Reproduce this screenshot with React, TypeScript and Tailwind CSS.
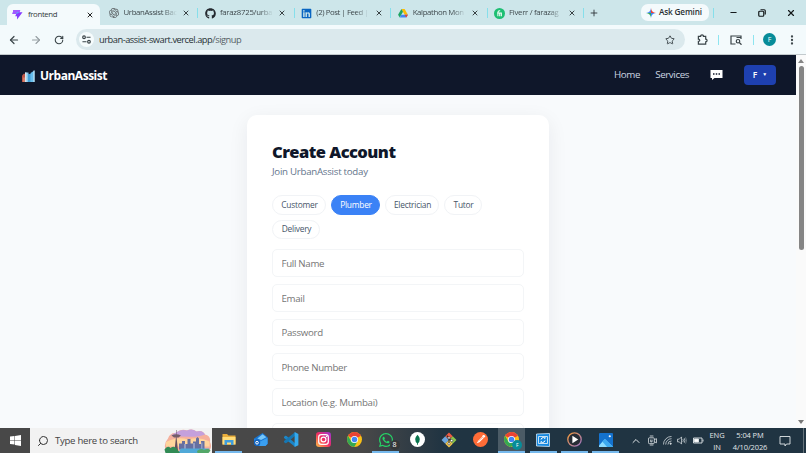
import React from 'react';
import {
  ArrowLeft,
  ArrowRight,
  ChevronUp,
  EllipsisVertical,
  Minus,
  Plus,
  RotateCw,
  Search,
  Star,
  X,
} from 'lucide-react';
import { FaGithub, FaLinkedin, FaWhatsapp } from 'react-icons/fa';
import { SiOpenai } from 'react-icons/si';

const DriveIcon = () => (
  <svg viewBox="0 0 24 22" className="w-[10px] h-[9px]">
    <path d="M8 0h8l8 14h-8z" fill="#fbbc04" />
    <path d="M8 0l4 7-8 14-4-7z" fill="#1fa463" />
    <path d="M8 14h16l-4 7H4z" fill="#4285f4" />
    <path d="M16 14h8l-4 7z" fill="#ea4335" />
  </svg>
);

const ViteIcon = () => (
  <svg viewBox="0 0 24 24" className="w-[11px] h-[11px]">
    <path d="M3 2h15l-2 5h7L11 23v-7H7l2-5H1z" fill="#863bff" />
    <path d="M3 2h15l-2 5-7 4H1z" fill="#a259ff" />
    <path d="M9 11l7-4h-5z" fill="#47bfff" />
  </svg>
);

const FiverrIcon = () => (
  <svg viewBox="0 0 24 24" className="w-[11px] h-[11px]">
    <circle cx="12" cy="12" r="12" fill="#1dbf73" />
    <path d="M8.500 18v-8q0-4 4-4h1M7 11h9v7M12.500 18v-7" fill="none" stroke="#fff" strokeWidth="2.200" />
  </svg>
);

const tabs = [
  { title: 'UrbanAssist Bac', icon: <SiOpenai className="w-[10px] h-[10px] text-[#55595c]" />, tracking: 'tracking-[-0.36px]' },
  { title: 'faraz8725/urba', icon: <FaGithub className="w-[11px] h-[11px] text-[#24292f]" />, tracking: 'tracking-[-0.25px]' },
  { title: '(2) Post | Feed |', icon: <FaLinkedin className="w-[11px] h-[11px] text-[#0a66c2]" />, tracking: 'tracking-[-0.42px]' },
  { title: 'Kalpathon Mon', icon: <DriveIcon />, tracking: 'tracking-[-0.36px]' },
  { title: 'Fiverr / farazag', icon: <FiverrIcon />, tracking: 'tracking-[-0.3px]' },
];

const TabStrip = () => (
  <div className="flex h-[25px] bg-[#cde6ea] text-[#3f494d] text-[7.8px]">
    <div className="mt-1 ml-[7px] w-[93px] shrink-0 flex items-center rounded-t-[6px] bg-[#f4fafc] pl-[5px] pr-[6px]">
      <ViteIcon />
      <span className="ml-[5px] flex-1 text-[#30383b] tracking-[-0.35px]">frontend</span>
      <X className="w-2 h-2 text-[#222]" strokeWidth={3} />
    </div>
    <div className="flex pl-[2px] pt-px">
      {tabs.map((tab) => (
        <div key={tab.title} className="flex items-center w-[96.400px] shrink-0 pl-[6.500px]">
          <span className="w-[11px] flex justify-center shrink-0">{tab.icon}</span>
          <span className={`ml-1 w-[53px] whitespace-nowrap [mask-image:linear-gradient(to_right,#000_75%,transparent)] ${tab.tracking}`}>
            {tab.title}
          </span>
          <X className="ml-[5.500px] w-2 h-2 shrink-0 text-[#3a4245]" strokeWidth={3} />
          <span className="ml-auto h-[10px] w-px bg-[#86dfeb]" />
        </div>
      ))}
    </div>
    <Plus className="ml-[5px] mt-2 w-[10px] h-[10px] text-[#30383b]" strokeWidth={2.2} />
    <div className="ml-auto mt-1 w-[68px] h-[17px] rounded-[7px] bg-[#f4fafc] flex items-center gap-[3px] pl-[5px] font-semibold text-[#2a3033] text-[8.2px] tracking-[-0.16px] whitespace-nowrap">
      <svg viewBox="0 0 24 24" className="w-[10px] h-[10px] shrink-0">
        <path d="M12 0q1 11 12 12H12z" fill="#ea4335" />
        <path d="M24 12q-11 1-12 12V12z" fill="#4285f4" />
        <path d="M12 24q-1-11-12-12h12z" fill="#34a853" />
        <path d="M0 12q11-1 12-12v12z" fill="#4285f4" />
      </svg>
      Ask Gemini
    </div>
    <span className="ml-[4px] mt-2 h-[10px] w-px bg-[#86dfeb]" />
    <div className="flex items-center gap-5 ml-[15px] mr-[10px] text-[#151a1c]">
      <Minus className="w-[9px] h-[9px]" strokeWidth={3} />
      <svg viewBox="0 0 16 16" className="w-2 h-2" fill="none" stroke="currentColor" strokeWidth="2.400">
        <rect x="1.500" y="4.500" width="10" height="10" rx="2" />
        <path d="M5 1.500h7.500q2 0 2 2V11" />
      </svg>
      <X className="w-[10px] h-[10px]" strokeWidth={2.8} />
    </div>
  </div>
);

const Toolbar = () => (
  <div className="flex items-center h-[30px] bg-[#f3fafc] border-b border-[#c3cacd] pl-2 text-[#394347]">
    <ArrowLeft className="w-3 h-3" strokeWidth={2.4} />
    <ArrowRight className="ml-[10px] w-3 h-3 text-[#959da1]" strokeWidth={2.2} />
    <RotateCw className="ml-[12px] w-[10px] h-[10px]" strokeWidth={2.6} />
    <div className="ml-[12px] w-[609px] h-[21px] rounded-full bg-[#dbe9ed] flex items-center pl-[3px] pr-[10px]">
      <span className="w-[15px] h-[15px] rounded-full bg-[#f6fcfd] flex items-center justify-center">
        <svg viewBox="0 0 20 20" className="w-[9px] h-[9px]" fill="none" stroke="currentColor" strokeWidth="2.500">
          <circle cx="4.500" cy="5" r="3" />
          <path d="M10 5h9M1 15h9" />
          <circle cx="15.500" cy="15" r="3" />
        </svg>
      </span>
      <span className="ml-[5px] flex-1 pt-px text-[9.3px] tracking-[-0.48px] text-[#283135]">
        urban-assist-swart.vercel.app<span className="text-[#566166]">/signup</span>
      </span>
      <Star className="w-[10px] h-[10px]" strokeWidth={2.2} />
    </div>
    <svg viewBox="0 0 24 24" className="ml-[12px] w-[11px] h-[11px]" fill="none" stroke="currentColor" strokeWidth="2.600">
      <path d="M3 5h5q0-3 3-3t3 3h5v6q3 0 3 3t-3 3v5H3v-6q3 0 3-2.500T3 11z" />
    </svg>
    <span className="ml-[10px] h-[10px] w-px bg-[#8ee5f0]" />
    <svg viewBox="0 0 24 20" className="ml-[11px] w-[12px] h-[10px]" fill="none" stroke="currentColor" strokeWidth="2.400">
      <path d="M11 18H2V2h20v6M13 5h9" />
      <circle cx="16" cy="12.500" r="3.500" />
      <path d="M19 15.500l4 4" />
    </svg>
    <span className="ml-[11px] h-[10px] w-px bg-[#8ee5f0]" />
    <span className="ml-[9px] w-[13px] h-[13px] rounded-full bg-[#078c99] text-white text-[7px] leading-[13px] text-center">F</span>
    <EllipsisVertical className="ml-[10px] w-3 h-3" strokeWidth={2.6} />
  </div>
);

const Navbar = () => (
  <nav className="flex items-center h-10 bg-[#0f172a] pl-[22px] pr-5 text-[#cbd5e1] text-[9.8px]">
    <svg viewBox="0 0 26 24" className="mt-[2px] w-[13px] h-3">
      <path d="M0 11l4-4 3 2v15H0z" fill="#bd5546" />
      <path d="M6 5h7v19H6z" fill="#86c7e8" />
      <path d="M6 5h3v19H6z" fill="#d5e4ed" />
      <path d="M12 8h6v16h-6z" fill="#429fd8" />
      <path d="M17 6l8-5v23h-8z" fill="#67bdec" />
      <path d="M23 1h2v23h-2z" fill="#d6edf7" />
      <path d="M3 15h2v9H3z" fill="#e9a388" />
    </svg>
    <span className="ml-[5px] flex-1 pt-px font-bold text-white text-[12px] tracking-[-0.48px]">UrbanAssist</span>
    <span className="pt-px tracking-[-0.35px]">Home</span>
    <span className="ml-[15px] pt-px tracking-[-0.42px]">Services</span>
    <svg viewBox="0 0 26 20" className="ml-[21px] w-[13px] h-[10px]">
      <path d="M1 0h24v16H9l-5 4v-4H1z" fill="#fff" />
      <path d="M6 8h3M11.500 8h3M17 8h3" stroke="#0f172a" strokeWidth="3" />
    </svg>
    <button className="ml-[21px] w-8 h-5 rounded-[4px] bg-[#1e40af] text-white font-semibold text-[8.5px] flex items-center justify-center gap-[5px]">
      F
      <span className="text-[5px]">▼</span>
    </button>
  </nav>
);

const roles = [
  { name: 'Customer', width: 'w-[54px]' },
  { name: 'Plumber', width: 'w-[49px]' },
  { name: 'Electrician', width: 'w-[54px]' },
  { name: 'Tutor', width: 'w-[38px]' },
  { name: 'Delivery', width: 'w-[48px]' },
];

const fields = ['Full Name', 'Email', 'Password', 'Phone Number', 'Location (e.g. Mumbai)', 'Experience'];

const SignupCard = () => (
  <div className="w-[302px] h-[420px] shrink-0 rounded-[10px] bg-white shadow-[0_5px_20px_rgba(15,23,42,0.07)] px-[25px] pt-6">
    <h1 className="text-[16.5px] leading-[25px] font-extrabold tracking-[-0.54px] text-[#0f172a]">Create Account</h1>
    <p className="pt-px text-[9.7px] leading-[14px] tracking-[-0.26px] text-[#64748b]">Join UrbanAssist today</p>
    <div className="mt-4 flex flex-wrap gap-[5px]">
      {roles.map(({ name, width }) => (
        <button
          key={name}
          className={`${width} h-[19.500px] pt-px pl-px rounded-full border text-[8.400px] tracking-[-0.25px] ${
            name === 'Plumber' ? 'bg-[#3b82f6] border-[#3b82f6] text-white' : 'border-[#f1f3f6] text-[#475569]'
          }`}
        >
          {name}
        </button>
      ))}
    </div>
    <div className="mt-[10px] flex flex-col gap-[7px]">
      {fields.map((field) => (
        <input
          key={field}
          placeholder={field}
          className="h-[27.800px] w-full rounded-[5px] border border-[#f3f5f7] pl-[8.500px] pt-px text-[9.700px] tracking-[-0.3px] placeholder:text-[#757575]"
        />
      ))}
    </div>
  </div>
);

const FolderIcon = () => (
  <svg viewBox="0 0 28 26" className="w-[14px] h-[13px]">
    <path d="M1 2h9l3 3h14v18H1z" fill="#e9ad3b" />
    <path d="M1 8h26v15H1z" fill="#ffdc79" />
    <path d="M5 14h18v10h-5v-5h-8v5H5z" fill="#3e9ddd" />
  </svg>
);

const MailIcon = () => (
  <svg viewBox="0 0 28 28" className="w-[15px] h-[15px]">
    <path d="M2 12L18 2l9 8v13l-4 3H6l-4-4z" fill="#1976d2" />
    <path d="M8 12L18 4l7 6-10 5z" fill="#77c7fa" />
    <path d="M2 13l14 4 11-7v12l-4 4H7l-5-4z" fill="#2689e8" />
    <path d="M13 18l14-7v11l-4 4H12z" fill="#3a9ff0" />
    <circle cx="7.500" cy="20" r="6" fill="#1263bd" />
    <circle cx="7.500" cy="20" r="2.500" fill="none" stroke="#fff" strokeWidth="1.800" />
  </svg>
);

const CodeIcon = () => (
  <svg viewBox="0 0 24 24" className="w-[15px] h-[15px]">
    <path d="M0 8l2-2 2 .5L18 18v6L0 9.500z" fill="#1b86c8" />
    <path d="M0 16l2 2 2-.5L18 6V0L0 14.500z" fill="#1677b3" />
    <path d="M17 0l6 3v18l-6 3z" fill="#35a9ed" />
  </svg>
);

const InstagramIcon = () => (
  <svg viewBox="0 0 28 28" className="w-[15px] h-[15px]">
    <defs>
      <linearGradient id="insta" x1="0" y1="1" x2="1" y2="0">
        <stop offset="0" stopColor="#ffc144" />
        <stop offset="0.500" stopColor="#f02b62" />
        <stop offset="1" stopColor="#9a38dc" />
      </linearGradient>
    </defs>
    <rect width="28" height="28" rx="6" fill="url(#insta)" />
    <g fill="none" stroke="#fff" strokeWidth="2.200">
      <rect x="5" y="5" width="18" height="18" rx="5" />
      <circle cx="14" cy="14" r="4.500" />
    </g>
    <circle cx="19.500" cy="8.500" r="1.300" fill="#fff" />
  </svg>
);

const ChromeIcon = () => (
  <svg viewBox="0 0 28 28" className="w-[15px] h-[15px]">
    <circle cx="14" cy="14" r="14" fill="#fbc116" />
    <path d="M14 14L2 7a14 14 0 0 1 24 0z" fill="#e94335" />
    <path d="M14 14L8 17.500 2 7a14 14 0 0 0 11.500 21l6-10.500z" fill="#34a853" />
    <circle cx="14" cy="14" r="6.700" fill="#fff" />
    <circle cx="14" cy="14" r="5.200" fill="#4285f4" />
  </svg>
);

const MongoIcon = () => (
  <svg viewBox="0 0 28 28" className="w-[15px] h-[15px]">
    <circle cx="14" cy="14" r="14" fill="#fff" />
    <path d="M14 5q9 9 0 17-9-8 0-17z" fill="#08734d" />
    <path d="M14 13v11" stroke="#08734d" strokeWidth="1.500" />
  </svg>
);

const GitIcon = () => (
  <svg viewBox="0 0 30 30" className="w-4 h-4">
    <path d="M15 1l7 7-7 7-7-7z" fill="#ee5a41" />
    <path d="M8 8l7 7-7 7-7-7z" fill="#6ba5df" />
    <path d="M22 8l7 7-7 7-7-7z" fill="#8bc34a" />
    <path d="M15 15l7 7-7 7-7-7z" fill="#f5c84c" />
    <path d="M11 7l4 4v12M15 12l5 4" stroke="#272b2d" strokeWidth="2" fill="none" />
    <g fill="#fff" stroke="#272b2d">
      <circle cx="15" cy="11" r="2.200" />
      <circle cx="20" cy="16" r="2.200" />
      <circle cx="15" cy="22" r="2.200" />
    </g>
  </svg>
);

const PostmanIcon = () => (
  <svg viewBox="0 0 28 28" className="w-[15px] h-[15px]">
    <circle cx="14" cy="14" r="14" fill="#ff6c37" />
    <path d="M7 21l3-5 8-8 2 3-8 8z" fill="#fff" />
    <circle cx="20" cy="8" r="2.500" fill="#fff" />
    <path d="M10 17l9-8" stroke="#ff6c37" />
  </svg>
);

const SyncIcon = () => (
  <svg viewBox="0 0 28 28" className="w-[14px] h-[14px]">
    <path d="M1 2l26-1v26L1 26z" fill="#1688df" stroke="#d8efff" strokeWidth="1.500" />
    <path d="M5 7h18v14H5z" fill="none" stroke="#fff" strokeWidth="1.500" />
    <path d="M10 13q1-4 5-4l3 2v-3M18 15q-1 4-5 4l-3-2v3" fill="none" stroke="#fff" strokeWidth="2" />
  </svg>
);

const PlayerIcon = () => (
  <svg viewBox="0 0 28 28" className="w-[15px] h-[15px]">
    <defs>
      <linearGradient id="ring" x2="1" y2="1">
        <stop stopColor="#f39a39" />
        <stop offset="1" stopColor="#9c75c9" />
      </linearGradient>
    </defs>
    <circle cx="14" cy="14" r="12.500" fill="#272d35" stroke="url(#ring)" strokeWidth="2.500" />
    <path d="M10 7l11 7-11 7z" fill="#fff" />
  </svg>
);

const PhotosIcon = () => (
  <svg viewBox="0 0 26 26" className="w-[14px] h-[14px]">
    <rect width="26" height="26" rx="2" fill="#1472ce" />
    <path d="M0 23L11 11l15 15H0z" fill="#8bdcff" />
    <path d="M11 11l15 15H15L6 16z" fill="#3daaf0" />
    <circle cx="20" cy="6" r="2" fill="#fff" />
  </svg>
);

const apps = [
  { name: 'explorer', icon: <FolderIcon />, open: true },
  { name: 'mail', icon: <MailIcon /> },
  { name: 'code', icon: <CodeIcon /> },
  { name: 'instagram', icon: <InstagramIcon /> },
  { name: 'chrome', icon: <ChromeIcon /> },
  { name: 'whatsapp', icon: <FaWhatsapp className="w-4 h-4 text-[#25d366]" />, open: true, badge: '8' },
  { name: 'mongo', icon: <MongoIcon /> },
  { name: 'git', icon: <GitIcon /> },
  { name: 'postman', icon: <PostmanIcon /> },
  { name: 'profile', icon: <ChromeIcon />, open: true, active: true, badge: 'F' },
  { name: 'sync', icon: <SyncIcon />, open: true },
  { name: 'player', icon: <PlayerIcon />, open: true },
  { name: 'photos', icon: <PhotosIcon />, open: true },
];

// Seattle skyline shown in the search box
const Skyline = () => (
  <svg viewBox="0 0 96 50" className="w-12 h-[25px]">
    <path d="M8 21q4-12 16-11Q34 0 46 5q10-5 19 2 12-4 17 6 12 3 10 15 6 12-5 20H5q-8-15 3-27z" fill="#f5b09c" />
    <path d="M14 15Q34 0 46 5q10-5 19 2 12-4 17 6-18 8-68 2z" fill="#c4a0dc" />
    <path d="M4 28q22-12 45-5 20-7 42 4v10H4z" fill="#ffd59c" />
    <path d="M30 43V31h6v-5h6v6h5V22h6v9h5v-4h6v-6l3-3 3 3v11h4v-6h7v20z" fill="#6670a0" />
    <path d="M40 43V32h4v11zM58 43V30h4v13zM74 43V29h3v14z" fill="#929bc2" />
    <path d="M21 45l3-27V4h1v14l3 27z" fill="#65505e" />
    <path d="M15 15q9-5 19 0l-5 4h-9z" fill="#735d69" />
    <path d="M34 41h57l-6 9H28z" fill="#50a9d8" />
    <path d="M1 43q6-9 12-3 8-6 14 3l5 7H3z" fill="#318b55" />
    <path d="M66 46q8-7 14-2 9-4 13 1l-4 5H67z" fill="#53a768" />
  </svg>
);

const Taskbar = () => (
  <div className="flex h-[25px] shrink-0 bg-linear-to-r from-[#484848] from-45% to-[#203442] to-55% text-white">
    <div className="w-[30px] flex items-center justify-center">
      <svg viewBox="0 0 22 22" className="w-[11px] h-[11px]" fill="#fff">
        <path d="M0 3l9-1v8H0zM10 2l12-2v10H10zM0 11h9v8l-9-1zM10 11h12v11l-12-2z" />
      </svg>
    </div>
    <div className="w-[182px] flex items-center bg-[#f2f2f2] pl-[7px] text-[#444] text-[9.6px]">
      <Search className="w-3 h-3 -scale-x-100 text-[#333]" strokeWidth={2} />
      <span className="ml-[6px] pt-px flex-1 whitespace-nowrap tracking-[-0.28px]">Type here to search</span>
      <Skyline />
    </div>
    <div className="flex pl-px">
      {apps.map((app) => (
        <div key={app.name} className="relative w-[31.450px] flex items-center justify-center">
          <div
            className={`w-[27px] h-full flex items-center justify-center border-b-2 ${app.open ? 'border-[#76b9ed]' : 'border-transparent'} ${
              app.active ? 'bg-[#4b5b66]' : ''
            }`}
          >
            {app.icon}
          </div>
          {app.badge && (
            <span
              className={`absolute bottom-[3px] w-[10px] h-[10px] rounded-full leading-[10px] text-center ${
                app.active ? 'bg-[#078c99] text-[5px] right-[5px]' : 'bg-[#343838] text-[7px] right-[2px]'
              }`}
            >
              {app.badge}
            </span>
          )}
        </div>
      ))}
    </div>
    <div className="ml-auto flex items-center text-[#e1e6e9]">
      <ChevronUp className="w-[12px] h-[12px]" strokeWidth={2} />
      <svg viewBox="0 0 20 24" className="ml-[6px] w-[9px] h-[11px]" fill="none" stroke="currentColor" strokeWidth="1.800">
        <rect x="1" y="6" width="13" height="13" rx="2" />
        <path d="M14 10l5-2v9l-5-2M4 2h8M4 22h8" />
        <path d="M6 10v5h3v-5" />
      </svg>
      {/* wifi, quadrant style */}
      <svg viewBox="0 0 20 20" className="ml-[6px] w-[9px] h-[9px]" fill="none" stroke="currentColor" strokeWidth="1.600">
        <path d="M1 19A18 18 0 0 1 19 1M6 19A13 13 0 0 1 19 6M11 19a8 8 0 0 1 8-8" />
        <circle cx="17" cy="17" r="1.500" fill="currentColor" />
      </svg>
      <svg viewBox="0 0 22 20" className="ml-[5px] w-[10px] h-[9px]" fill="none" stroke="currentColor" strokeWidth="1.600">
        <path d="M1 7h4l5-5v16l-5-5H1zM13 7q2 3 0 6M16 5q3 5 0 10" />
        <path d="M19 3q4 7 0 14" opacity="0.5" />
      </svg>
      <svg viewBox="0 0 22 14" className="ml-[6px] w-[11px] h-[7px]" fill="none" stroke="currentColor" strokeWidth="1.800">
        <path d="M1 2h17v10H1zM20 5v4" />
        <path d="M3 4h8v6H3z" fill="#fff" />
      </svg>
      <div className="ml-[5px] w-[16px] text-[7.5px] leading-[12px] text-center tracking-[-0.1px]">
        <div>ENG</div>
        <div>IN</div>
      </div>
      <div className="ml-[6px] w-[38px] text-[7.5px] leading-[12px] text-center tracking-[-0.1px] whitespace-nowrap">
        <div>5:04 PM</div>
        <div>4/10/2026</div>
      </div>
      <svg viewBox="0 0 24 24" className="ml-[10px] mr-[12px] w-[12px] h-[12px]" fill="none" stroke="currentColor" strokeWidth="1.800">
        <path d="M2 3h20v15h-7l-3 4v-4H2z" />
      </svg>
      <span className="mr-[2px] h-full w-px bg-[#66737b]" />
    </div>
  </div>
);

export default function App() {
  return (
    <div className="w-[806px] h-[453px] flex flex-col overflow-hidden bg-[#f8fafc] font-['Open_Sans','Noto_Sans',sans-serif]">
      <TabStrip />
      <Toolbar />
      <div className="flex flex-1 min-h-0">
        <main className="w-[796px] overflow-hidden">
          <Navbar />
          <div className="flex justify-center pt-5">
            <SignupCard />
          </div>
        </main>
        <div className="w-[10px] flex flex-col items-center bg-[#fafafa] py-1">
          <span className="border-x-[3px] border-x-transparent border-b-[4px] border-b-[#858585]" />
          <span className="mt-[3px] w-[5px] h-[184px] rounded-full bg-[#858585]" />
          <span className="mt-auto border-x-[3px] border-x-transparent border-t-[4px] border-t-[#777]" />
        </div>
      </div>
      <Taskbar />
    </div>
  );
}
